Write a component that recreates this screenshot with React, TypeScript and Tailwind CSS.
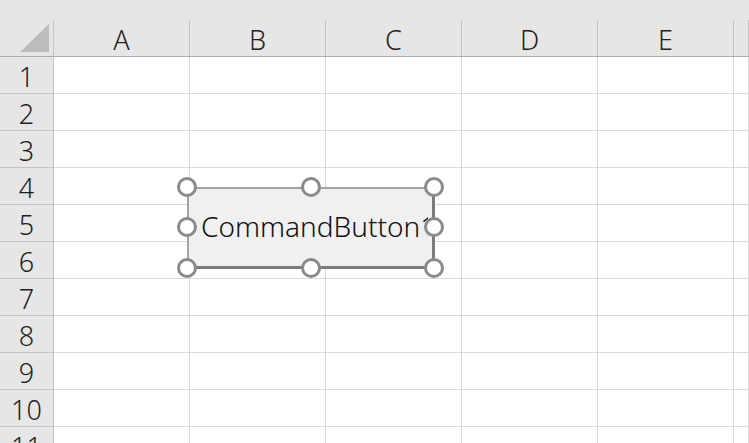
import React from "react";

const cols = ["A", "B", "C", "D", "E", ""];
const rows = [1, 2, 3, 4, 5, 6, 7, 8, 9, 10, 11];

const handles: [number, number][] = [
  [187, 187],
  [311, 187],
  [434, 187],
  [187, 227],
  [434, 227],
  [187, 268],
  [311, 268],
  [434, 268],
];

export default function App() {
  return (
    <div
      className="relative w-[749px] h-[443px] overflow-hidden bg-white text-[#1f1f1f] font-light"
      style={{ fontFamily: '"Noto Sans", "Liberation Sans", sans-serif' }}
    >
      {/* Column headers */}
      <div className="grid grid-cols-[54px_136px_136px_136px_136px_136px_1fr] h-[57px] bg-[#e6e6e6] border-b border-[#ababab]">
        <div className="relative border-r border-[#c4c4c4] mt-[20px]">
          <svg className="absolute left-[-1px] top-[-20px]" width="54" height="56" viewBox="0 0 54 56">
            <polygon points="50,24 50,52 21,52" fill="#bcbcbc" />
          </svg>
        </div>
        {cols.map((c, i) => (
          <div
            key={i}
            className="mt-[20px] h-[36px] border-r border-[#c4c4c4] flex items-center justify-center text-[27px] leading-none pt-[3px]"
          >
            {c}
          </div>
        ))}
      </div>

      {/* Rows */}
      {rows.map((r) => (
        <div key={r} className="grid grid-cols-[54px_136px_136px_136px_136px_136px_1fr] h-[37px]">
          <div className="bg-[#e6e6e6] border-r border-b border-[#c4c4c4] flex items-center justify-center text-[27px] leading-none pt-[2px]">
            {r}
          </div>
          {cols.map((_, i) => (
            <div key={i} className="border-r border-b border-[#d9d9d9]" />
          ))}
        </div>
      ))}

      {/* CommandButton1 in design mode */}
      <div className="absolute left-[187px] top-[187px] w-[248px] h-[82px] bg-[#f0f0f0] border-t-2 border-l-2 border-[#a3a3a3] border-b-[3px] border-r-[3px] border-b-[#7c7c7c] border-r-[#7c7c7c] flex items-center">
        <div className="ml-[12px] mr-[4px] flex-1 overflow-hidden">
          <span className="block whitespace-nowrap text-[28px] leading-none pb-[3px] text-[#111]">
            CommandButton1
          </span>
        </div>
      </div>

      {handles.map(([x, y], i) => (
        <div
          key={i}
          className="absolute w-[20px] h-[20px] rounded-full bg-white border-[3px] border-[#8a8a8a]"
          style={{ left: x - 10, top: y - 10 }}
        />
      ))}
    </div>
  );
}
